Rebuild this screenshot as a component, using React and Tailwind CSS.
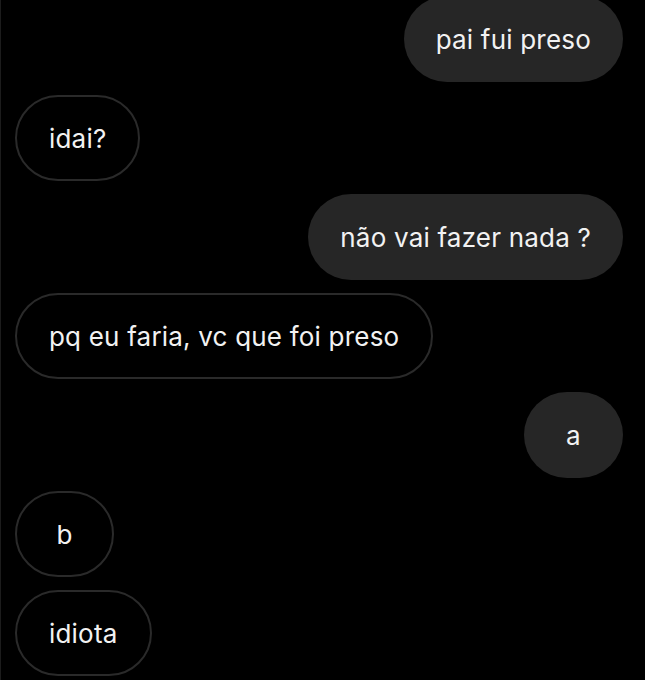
import React from 'react';

const messages = [
  { id: 1, mine: true, text: 'pai fui preso' },
  { id: 2, mine: false, text: 'idai?' },
  { id: 3, mine: true, text: 'não vai fazer nada ?' },
  { id: 4, mine: false, text: 'pq eu faria, vc que foi preso' },
  { id: 5, mine: true, text: 'a' },
  { id: 6, mine: false, text: 'b' },
  { id: 7, mine: false, text: 'idiota' },
];

const Bubble = ({ mine, text }) => (
  <div
    className={`h-[86px] min-w-[99px] px-[32px] rounded-full flex items-center justify-center text-[26px] tracking-[0.2px] text-[#f2f2f2] whitespace-nowrap ${
      mine
        ? 'self-end mr-[22px] bg-[#262626]'
        : 'self-start ml-[14px] border-2 border-[#2a2a2a]'
    }`}
  >
    {text}
  </div>
);

export default function App() {
  return (
    <div
      className="w-[645px] h-[680px] bg-black overflow-hidden border-l border-[#1c1c1c]"
      style={{ fontFamily: 'Inter, "Liberation Sans", sans-serif' }}
    >
      {/* chat thread */}
      <div className="flex flex-col gap-[13px] -mt-[4px]">
        {messages.map(m => (
          <Bubble key={m.id} mine={m.mine} text={m.text} />
        ))}
      </div>
    </div>
  );
}
